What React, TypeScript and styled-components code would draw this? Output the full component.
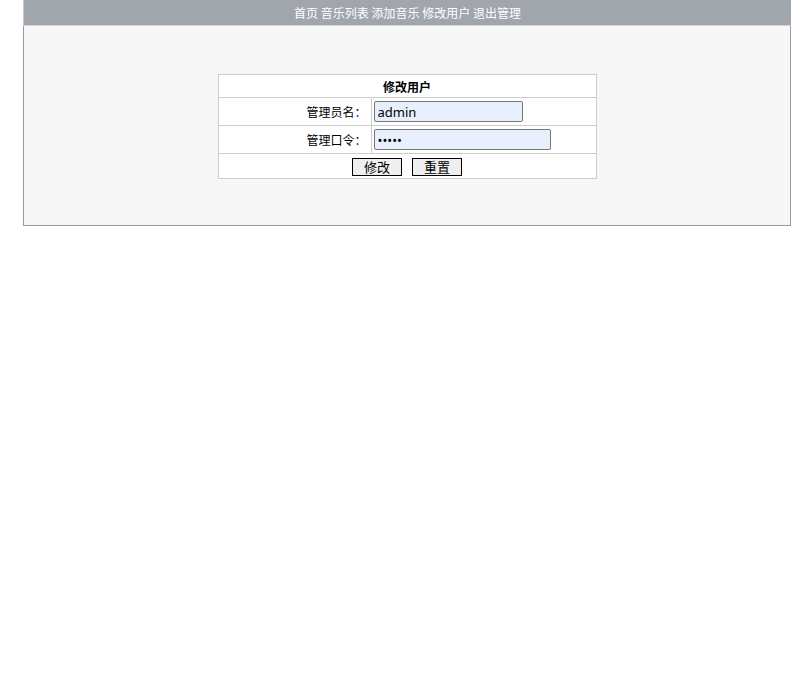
import React from "react";
import styled, { createGlobalStyle } from "styled-components";

const GlobalStyle = createGlobalStyle`
  html, body {
    margin: 0;
    padding: 0;
    background: #fff;
    font-family: "Noto Sans CJK SC", "Noto Sans", sans-serif;
    font-size: 12px;
    color: #000;
  }
`;

const Page = styled.div`
  margin-left: 23px;
  width: 768px;
`;

const TopBar = styled.div`
  height: 25px;
  line-height: 25px;
  background: #a1a5ac;
  border-left: 1px solid #c4c7cc;
  border-bottom: 1px solid #d2d4d7;
  color: #fff;
  text-align: center;
  font-size: 12px;
`;

const NavLink = styled.a`
  color: #fff;
  text-decoration: none;
`;

const Panel = styled.div`
  background: #f7f7f7;
  border: 1px solid #9a9a9a;
  border-top: none;
  height: 151px;
  padding-top: 48px;
  display: flex;
  justify-content: center;
  align-items: flex-start;
`;

const FormTable = styled.table`
  width: 379px;
  border-collapse: collapse;
  background: #fff;
  border: 1px solid #cccccc;
  font-size: 12px;
`;

const Row = styled.tr<{ $h: number }>`
  height: ${(p) => p.$h}px;
`;

const Cell = styled.td<{ $align?: string; $bold?: boolean }>`
  border: 1px solid #cccccc;
  padding: 0 2px;
  text-align: ${(p) => p.$align || "left"};
  font-weight: ${(p) => (p.$bold ? "bold" : "normal")};
  vertical-align: middle;
`;

const LabelCell = styled(Cell)`
  width: 146px;
  padding-right: 4px;
`;

const Field = styled.input<{ $w: number }>`
  box-sizing: border-box;
  width: ${(p) => p.$w}px;
  height: 21px;
  margin: 0;
  padding: 1px 3px;
  background: #e8f0fe;
  border: 1px solid #767676;
  border-radius: 2px;
  font-family: "Noto Sans", "Liberation Sans", sans-serif;
  font-size: 13px;
  color: #000;
  display: block;
  outline: none;
`;

const Button = styled.button`
  box-sizing: border-box;
  width: 50px;
  height: 18px;
  padding: 0;
  margin: 0 5px;
  background: #efefef;
  border: 1px solid #000;
  font-family: "Noto Sans CJK SC", sans-serif;
  font-size: 13px;
  line-height: 14px;
  color: #000;
  vertical-align: middle;
`;

export default function App() {
  const links = ["首页", "音乐列表", "添加音乐", "修改用户", "退出管理"];
  return (
    <>
      <GlobalStyle />
      <Page>
        <TopBar>
          {links.map((l, i) => (
            <React.Fragment key={l}>
              <NavLink href="#">{l}</NavLink>
              {i < links.length - 1 ? " " : ""}
            </React.Fragment>
          ))}
        </TopBar>
        <Panel>
          <FormTable>
            <tbody>
              <Row $h={23}>
                <Cell colSpan={2} $align="center" $bold>
                  修改用户
                </Cell>
              </Row>
              <Row $h={28}>
                <LabelCell $align="right">管理员名：</LabelCell>
                <Cell>
                  <Field $w={149} type="text" defaultValue="admin" />
                </Cell>
              </Row>
              <Row $h={28}>
                <LabelCell $align="right">管理口令：</LabelCell>
                <Cell>
                  <Field $w={177} type="password" defaultValue="admin" />
                </Cell>
              </Row>
              <Row $h={25}>
                <Cell colSpan={2} $align="center">
                  <Button type="submit">修改</Button>
                  <Button type="reset">重置</Button>
                </Cell>
              </Row>
            </tbody>
          </FormTable>
        </Panel>
      </Page>
    </>
  );
}
